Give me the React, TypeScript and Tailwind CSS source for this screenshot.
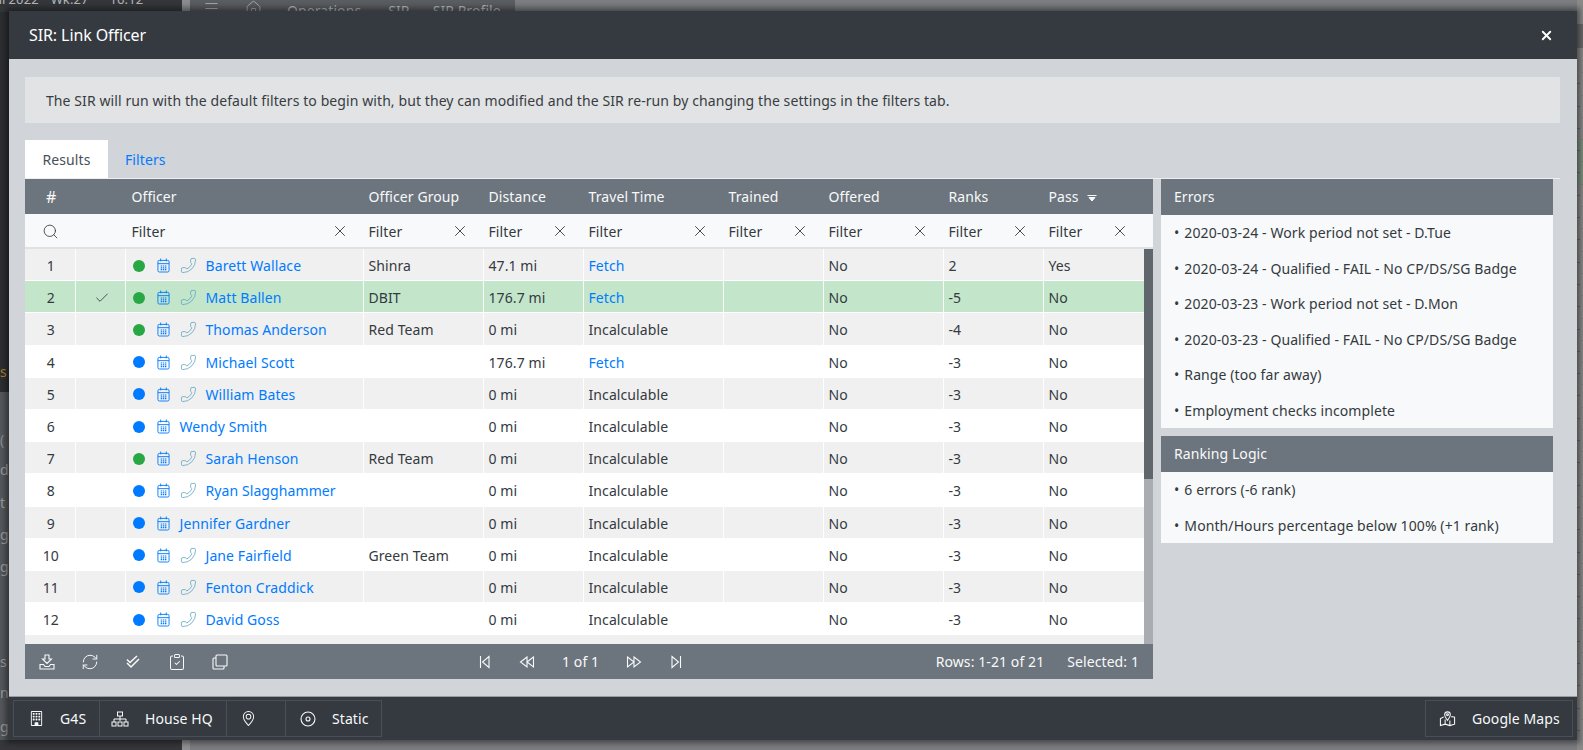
import { Search, X, Check, Phone, Menu, Home, RefreshCw } from 'lucide-react'
import { BsBuilding, BsGeoAlt, BsClipboardCheck } from 'react-icons/bs'

const columns = [
  { label: 'Officer Group', width: 'w-[120px]' },
  { label: 'Distance', width: 'w-[100px]' },
  { label: 'Travel Time', width: 'w-[140px]' },
  { label: 'Trained', width: 'w-[100px]' },
  { label: 'Offered', width: 'w-[120px]' },
  { label: 'Ranks', width: 'w-[100px]' },
]

const officers = [
  { id: 1, name: 'Barett Wallace', group: 'Shinra', distance: '47.1 mi', travel: 'Fetch', ranks: '2', pass: 'Yes', online: true, phone: true },
  { id: 2, name: 'Matt Ballen', group: 'DBIT', distance: '176.7 mi', travel: 'Fetch', ranks: '-5', pass: 'No', online: true, phone: true },
  { id: 3, name: 'Thomas Anderson', group: 'Red Team', distance: '0 mi', travel: 'Incalculable', ranks: '-4', pass: 'No', online: true, phone: true },
  { id: 4, name: 'Michael Scott', group: '', distance: '176.7 mi', travel: 'Fetch', ranks: '-3', pass: 'No', online: false, phone: true },
  { id: 5, name: 'William Bates', group: '', distance: '0 mi', travel: 'Incalculable', ranks: '-3', pass: 'No', online: false, phone: true },
  { id: 6, name: 'Wendy Smith', group: '', distance: '0 mi', travel: 'Incalculable', ranks: '-3', pass: 'No', online: false, phone: false },
  { id: 7, name: 'Sarah Henson', group: 'Red Team', distance: '0 mi', travel: 'Incalculable', ranks: '-3', pass: 'No', online: true, phone: true },
  { id: 8, name: 'Ryan Slagghammer', group: '', distance: '0 mi', travel: 'Incalculable', ranks: '-3', pass: 'No', online: false, phone: true },
  { id: 9, name: 'Jennifer Gardner', group: '', distance: '0 mi', travel: 'Incalculable', ranks: '-3', pass: 'No', online: false, phone: false },
  { id: 10, name: 'Jane Fairfield', group: 'Green Team', distance: '0 mi', travel: 'Incalculable', ranks: '-3', pass: 'No', online: false, phone: true },
  { id: 11, name: 'Fenton Craddick', group: '', distance: '0 mi', travel: 'Incalculable', ranks: '-3', pass: 'No', online: false, phone: true },
  { id: 12, name: 'David Goss', group: '', distance: '0 mi', travel: 'Incalculable', ranks: '-3', pass: 'No', online: false, phone: true },
]

const errors = [
  '2020-03-24 - Work period not set - D.Tue',
  '2020-03-24 - Qualified - FAIL - No CP/DS/SG Badge',
  '2020-03-23 - Work period not set - D.Mon',
  '2020-03-23 - Qualified - FAIL - No CP/DS/SG Badge',
  'Range (too far away)',
  'Employment checks incomplete',
]

const ranking = ['6 errors (-6 rank)', 'Month/Hours percentage below 100% (+1 rank)']

const sliverText = [
  { top: 'top-[365px]', text: 's', color: 'text-[#a8822f]' },
  { top: 'top-[433px]', text: '(', color: 'text-[#8a9099]' },
  { top: 'top-[463px]', text: 'd', color: 'text-[#9a9a9a]' },
  { top: 'top-[496px]', text: 't', color: 'text-[#9a9a9a]' },
  { top: 'top-[528px]', text: 'g', color: 'text-[#9a9a9a]' },
  { top: 'top-[560px]', text: 'g', color: 'text-[#9a9a9a]' },
  { top: 'top-[655px]', text: 's', color: 'text-[#9a9a9a]' },
  { top: 'top-[686px]', text: 'n', color: 'text-[#9a9a9a]' },
  { top: 'top-[720px]', text: 'g', color: 'text-[#9a9a9a]' },
]

function CalendarIcon() {
  return (
    <svg viewBox="0 0 14 16" className="ml-[12px] h-[15px] w-[13px] shrink-0 text-[#007bff]" fill="none" stroke="currentColor" strokeWidth="1">
      <rect x="1" y="2.5" width="12" height="12.5" rx="1.5" />
      <path d="M1 6h12M4 0.5v3M10 0.5v3" />
      <path d="M4 8.5h1.5M6.3 8.5h1.5M8.6 8.5h1.5M4 10.5h1.5M6.3 10.5h1.5M8.6 10.5h1.5M4 12.5h1.5M6.3 12.5h1.5M8.6 12.5h1.5" strokeWidth="1.2" />
    </svg>
  )
}

function FirstIcon({ flip }: { flip?: boolean }) {
  return (
    <svg viewBox="0 0 13 14" className={`h-[14px] w-[13px] ${flip ? '-scale-x-100' : ''}`} fill="none" stroke="currentColor" strokeWidth="1.1">
      <path d="M2.5 1v12M11 1.5 4.5 7l6.5 5.5z" />
    </svg>
  )
}

function RewindIcon({ flip }: { flip?: boolean }) {
  return (
    <svg viewBox="0 0 16 14" className={`h-[14px] w-[16px] ${flip ? '-scale-x-100' : ''}`} fill="none" stroke="currentColor" strokeWidth="1.1">
      <path d="M8 2 1.5 7 8 12zM14.5 2 8 7l6.5 5z" />
    </svg>
  )
}

function FilterCell({ className, first }: { className: string; first?: boolean }) {
  return (
    <div className={`flex items-center justify-between pr-[14.5px] ${first ? 'pl-[6px]' : 'pl-[5px]'} ${className}`}>
      <span>Filter</span>
      <X className="h-[18px] w-[18px]" strokeWidth={1.2} />
    </div>
  )
}

function Row({ o }: { o: (typeof officers)[number] }) {
  const selected = o.id === 2
  const bg = selected ? 'bg-[#c3e6cb]' : o.id % 2 === 1 ? 'bg-[#f0f0f0]' : 'bg-white'
  const cell = 'flex h-full items-center border-r border-white/90 pt-[2px]'
  return (
    <div className={`flex h-[32.2px] shrink-0 items-center border-b border-white text-[#343a40] ${bg}`}>
      <div className={`${cell} w-[50.5px] justify-center pl-[2px]`}>{o.id}</div>
      <div className={`${cell} w-[50px] justify-center pl-[3px]`}>
        {selected && <Check className="h-[16px] w-[16px]" strokeWidth={1.3} />}
      </div>
      <div className={`${cell} w-[238px] pl-[7px]`}>
        <span className={`h-3 w-3 shrink-0 rounded-full ${o.online ? 'bg-[#28a745]' : 'bg-[#007bff]'}`} />
        <CalendarIcon />
        {o.phone && <Phone className="ml-[10px] h-[17px] w-[17px] -scale-x-100 text-[#5ea3c0]" strokeWidth={1.1} />}
        <span className={`text-[#007bff] ${o.phone ? 'ml-[9px]' : 'ml-[10px]'}`}>{o.name}</span>
      </div>
      <div className={`${cell} w-[120px] pl-[5px]`}>{o.group}</div>
      <div className={`${cell} w-[100px] pl-[5px]`}>{o.distance}</div>
      <div className={`${cell} w-[140px] pl-[5px] ${o.travel === 'Fetch' ? 'text-[#007bff]' : ''}`}>{o.travel}</div>
      <div className={`${cell} w-[100px] pl-[5px]`} />
      <div className={`${cell} w-[120px] pl-[5px]`}>No</div>
      <div className={`${cell} w-[100px] pl-[5px]`}>{o.ranks}</div>
      <div className="flex h-full flex-1 items-center pl-[5px] pt-[2px]">{o.pass}</div>
    </div>
  )
}

function SidePanel({ title, items }: { title: string; items: string[] }) {
  return (
    <div className="w-[392px] bg-[#f8f9fa]">
      <div className="flex h-9 items-center bg-[#6c757d] px-[13px] pb-[1px] text-[#f8f9fa]">{title}</div>
      <div className="px-[13px]">
        {items.map((item) => (
          <div key={item} className="flex h-[35.5px] items-center text-[#343a40]">
            <span className="mr-[5px]">•</span>
            {item}
          </div>
        ))}
      </div>
    </div>
  )
}

function FooterButton({ icon, label, className }: { icon: React.ReactNode; label?: string; className: string }) {
  return (
    <div className={`flex h-[35px] items-center border-r border-[#4a4f56] text-[#f8f9fa] ${className}`}>
      {icon}
      {label && <span className="ml-[16px]">{label}</span>}
    </div>
  )
}

function ToolIcon({ children }: { children: React.ReactNode }) {
  return <div className="flex w-[18px] justify-center">{children}</div>
}

export default function App() {
  return (
    <div className="relative h-[750px] w-[1583px] overflow-hidden bg-[#7b7d80] font-['Noto_Sans','Open_Sans',sans-serif] text-[14px] tracking-[0.09px]">
      {/* page behind the modal */}
      <div className="flex h-[40px] text-[#b5b7ba]">
        <div className="w-[182px] overflow-hidden bg-[#34373a] text-[13px] leading-none">
          <div className="-mt-[7px] flex whitespace-nowrap">
            <span className="-ml-[6px]">ul</span>
            <span className="ml-[3px]">2022</span>
            <span className="ml-[12px]">Wk.27</span>
            <span className="ml-[21px]">16:12</span>
          </div>
        </div>
        <div className="w-[8px] bg-[#8a8c8e]" />
        <div className="flex w-[325px] items-start bg-[#5a5d61] pl-[13px]">
          <Menu className="h-[17px] w-[17px]" strokeWidth={1.2} />
          <Home className="ml-[25px] h-[17px] w-[17px]" strokeWidth={1.2} />
          <span className="ml-[25px]">Operations</span>
          <span className="ml-[27px]">SIR</span>
          <span className="ml-[23px]">SIR Profile</span>
        </div>
      </div>
      <div className="absolute bottom-0 left-0 top-[12px] w-[9px] overflow-hidden bg-[#54575b]">
        <div className="h-[380px] bg-[#2c2e31]" />
        {sliverText.map((s) => (
          <span key={s.top} className={`absolute left-0 -mt-[12px] text-[14px] leading-none ${s.top} ${s.color}`}>{s.text}</span>
        ))}
      </div>
      <div className="absolute bottom-0 left-0 h-[10px] w-[182px] bg-[#35373a]" />
      <div className="absolute bottom-0 left-[182px] h-[10px] w-[8px] bg-[#8f9193]" />
      <div className="absolute bottom-0 right-0 top-0 flex w-[6px] flex-col bg-[#8a8a8a]">
        <div className="absolute left-0 top-[24px] h-[24px] w-full bg-[#6a6a6a]" />
        <div className="absolute left-0 top-[140px] h-[45px] w-full bg-[#7d8f7f]" />
        <div className="h-[62px] shrink-0" />
        {Array.from({ length: 30 }).map((_, i) => (
          <div key={i} className="relative z-10 h-[22.3px] shrink-0">
            <div className="absolute bottom-0 left-0 h-px w-[3px] bg-[#4a4a4a]" />
            <div className="absolute bottom-[11px] right-0 h-px w-[2px] bg-[#77705f]" />
          </div>
        ))}
      </div>

      {/* modal */}
      <div className="absolute left-[9px] top-[11px] flex h-[729px] w-[1568px] flex-col bg-[#d1d4d9] shadow-[0_0_6px_3px_rgba(0,0,0,0.45)]">
        <div className="flex h-[48px] shrink-0 items-center justify-between bg-[#343a40] pl-[20px] pr-[23px] text-[16px] tracking-[-0.1px] text-white">
          <span>SIR: Link Officer</span>
          <X className="h-[15px] w-[15px]" strokeWidth={3} />
        </div>

        <div className="flex flex-1 flex-col px-[16px] pt-[18px]">
          <div className="flex h-[46px] w-[1535px] shrink-0 items-center bg-[#e2e3e5] px-[21px] text-[#383d41]">
            The SIR will run with the default filters to begin with, but they can modified and the SIR re-run by changing the settings in the filters tab.
          </div>

          <div className="mt-[17px] flex h-[39px] w-[1535px] shrink-0 border-b border-white/60">
            <div className="flex w-[83px] items-center justify-center bg-white text-[#495057]">Results</div>
            <div className="flex items-center pl-[17px] text-[#007bff]">Filters</div>
          </div>

          <div className="flex gap-[8px]">
            <div className="flex h-[500px] w-[1128px] flex-col">
              <div className="flex h-[35px] shrink-0 items-center bg-[#6c757d] text-[#f8f9fa]">
                <div className="w-[50.5px] pl-[2px] text-center text-[16px]">#</div>
                <div className="w-[50px]" />
                <div className="w-[238px] pl-[6px]">Officer</div>
                {columns.map((c) => (
                  <div key={c.label} className={`${c.width} pl-[5px]`}>{c.label}</div>
                ))}
                <div className="flex flex-1 items-center pl-[5px]">
                  Pass
                  <svg viewBox="0 0 10 8" className="ml-[8px] mt-[3px] h-[8px] w-[10px]" fill="none" stroke="currentColor">
                    <path d="M0.5 1.5h9" />
                    <path d="M2 3.5h6L5 7z" fill="currentColor" />
                  </svg>
                </div>
              </div>
              <div className="flex h-[35px] shrink-0 items-center border-b-2 border-[#dee2e6] bg-[#f8f9fa] pt-[1px] text-[#343a40]">
                <div className="flex w-[50.5px] justify-center"><Search className="h-[17px] w-[17px]" strokeWidth={1.2} /></div>
                <div className="w-[50px]" />
                <FilterCell first className="w-[238px]" />
                {columns.map((c) => (
                  <FilterCell key={c.label} className={c.width} />
                ))}
                <FilterCell className="w-[100px]" />
              </div>
              <div className="flex h-[395px] shrink-0">
                <div className="flex w-[1119px] flex-col overflow-hidden">
                  {officers.map((o) => (
                    <Row key={o.id} o={o} />
                  ))}
                  <div className="h-[9px] shrink-0 bg-[#f0f0f0]" />
                </div>
                <div className="flex-1 bg-[#a9acb0]">
                  <div className="h-[230px] bg-[#5f666c]" />
                </div>
              </div>
              <div className="relative flex h-[35px] shrink-0 items-center justify-between bg-[#6c757d] pl-[13px] pr-[14px] text-[#f8f9fa]">
                <div className="flex items-center gap-[25.2px]">
                  <ToolIcon>
                    <svg viewBox="0 0 16 16" className="h-[16px] w-[16px]" fill="none" stroke="currentColor" strokeWidth="1.1">
                      <path d="M6 1h4v4h2.5L8 9.5 3.5 5H6z" />
                      <path d="M1 10.5V15h14v-4.5h-3.5L10 12.5H6l-1.5-2z" />
                    </svg>
                  </ToolIcon>
                  <ToolIcon><RefreshCw className="h-[18px] w-[18px]" strokeWidth={1.3} /></ToolIcon>
                  <ToolIcon>
                    <svg viewBox="0 0 14 14" className="h-[14px] w-[14px]" fill="none" stroke="currentColor" strokeWidth="1.5">
                      <path d="M1 4.5l3 3 7-6.5" />
                      <path d="M1 8l4 4 8-8" />
                    </svg>
                  </ToolIcon>
                  <ToolIcon><BsClipboardCheck className="h-[16px] w-[16px]" /></ToolIcon>
                  <ToolIcon>
                    <svg viewBox="0 0 16 16" className="h-[16px] w-[16px]" fill="none" stroke="currentColor" strokeWidth="1.1">
                      <rect x="4" y="1" width="11" height="11" rx="1" />
                      <path d="M4 4H2a1 1 0 0 0-1 1v9a1 1 0 0 0 1 1h9a1 1 0 0 0 1-1v-2" />
                    </svg>
                  </ToolIcon>
                </div>
                <div className="absolute left-[453px] flex items-center">
                  <FirstIcon />
                  <span className="ml-[28px]"><RewindIcon /></span>
                  <span className="ml-[27px]">1 of 1</span>
                  <span className="ml-[27px]"><RewindIcon flip /></span>
                  <span className="ml-[28px]"><FirstIcon flip /></span>
                </div>
                <div className="flex gap-[23px]">
                  <span>Rows: 1-21 of 21</span>
                  <span>Selected: 1</span>
                </div>
              </div>
            </div>

            <div className="flex flex-col gap-[8px]">
              <SidePanel title="Errors" items={errors} />
              <SidePanel title="Ranking Logic" items={ranking} />
            </div>
          </div>
        </div>

        <div className="flex h-[44px] shrink-0 items-center justify-between border-t border-white/50 bg-[#343a40] px-[4px]">
          <div className="flex border border-[#4a4f56]">
            <FooterButton icon={<BsBuilding className="h-[15px] w-[15px]" />} label="G4S" className="w-[86px] pl-[15px]" />
            <FooterButton
              icon={
                <svg viewBox="0 0 18 16" className="h-[16px] w-[18px]" fill="none" stroke="currentColor" strokeWidth="1">
                  <rect x="6.5" y="1" width="5" height="4" />
                  <path d="M9 5v5M3 11V8h12v3" />
                  <rect x="1" y="11" width="4" height="4" />
                  <rect x="7" y="11" width="4" height="4" />
                  <rect x="13" y="11" width="4" height="4" />
                </svg>
              }
              label="House HQ"
              className="w-[127px] pl-[11px]"
            />
            <FooterButton icon={<BsGeoAlt className="h-[15px] w-[15px]" />} className="w-[59px] pl-[14px]" />
            <FooterButton
              icon={
                <svg viewBox="0 0 16 16" className="h-[16px] w-[16px]" fill="none" stroke="currentColor" strokeWidth="1.1">
                  <circle cx="8" cy="8" r="7" />
                  <circle cx="8" cy="8" r="2" />
                </svg>
              }
              label="Static"
              className="w-[95px] pl-[14px] !border-r-0"
            />
          </div>
          <div className="flex h-[37px] w-[148px] items-center border border-[#4a4f56] pl-[13px] text-[#f8f9fa]">
            <svg viewBox="0 0 18 18" className="h-[17px] w-[17px]" fill="none" stroke="currentColor" strokeWidth="1.1">
              <path d="M9 11C7 8.5 6 7 6 5a3 3 0 0 1 6 0c0 2-1 3.5-3 6z" />
              <circle cx="9" cy="5" r="1" />
              <path d="M5 7.5 1.5 9v7.5L6.5 15l5 1.5 5-1.5V7.5L13 7M6.5 10v5M11.5 11v5.5" />
            </svg>
            <span className="ml-[16px]">Google Maps</span>
          </div>
        </div>
      </div>
    </div>
  )
}
